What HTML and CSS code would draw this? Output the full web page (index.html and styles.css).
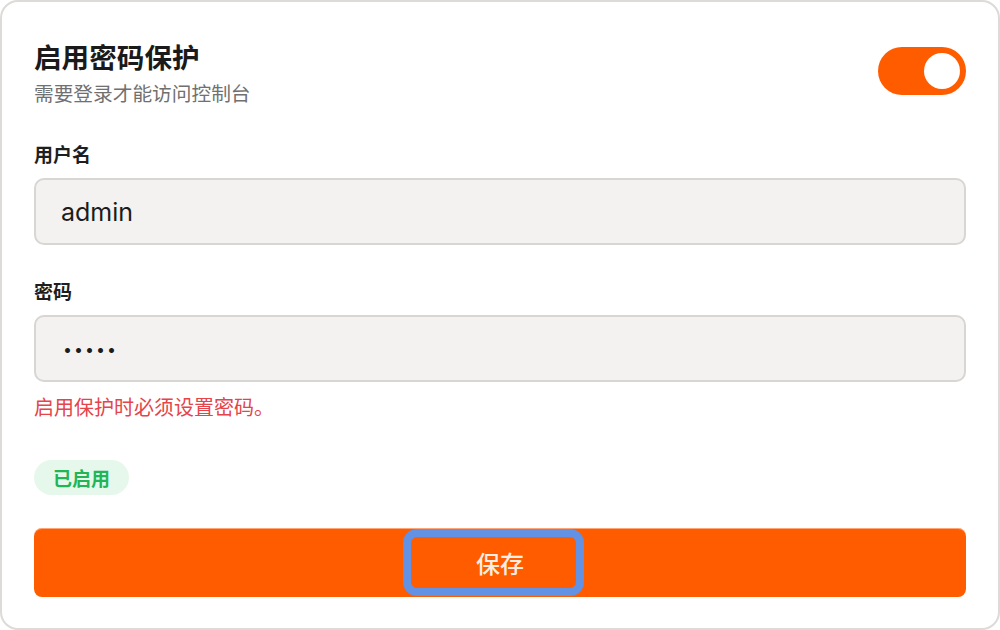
FILE: index.html
```html
<!DOCTYPE html>
<html lang="zh-CN">
<head>
<meta charset="utf-8">
<title>密码保护</title>
<link rel="stylesheet" href="styles.css">
</head>
<body>
<div class="card">
  <div class="header">
    <div class="heading">
      <h1 class="title">启用密码保护</h1>
      <p class="subtitle">需要登录才能访问控制台</p>
    </div>
    <div class="toggle" role="switch" aria-checked="true"><span class="knob"></span></div>
  </div>

  <div class="field">
    <label class="label" for="user">用户名</label>
    <input class="input" id="user" type="text" value="admin">
  </div>

  <div class="field">
    <label class="label" for="pass">密码</label>
    <input class="input input-pass" id="pass" type="password" value="admin">
    <p class="error">启用保护时必须设置密码。</p>
  </div>

  <div class="status-row"><span class="badge">已启用</span></div>

  <button class="save" type="button"><span class="save-ring">保存</span></button>
</div>
</body>
</html>
```

FILE: styles.css
```css
* { box-sizing: border-box; }
html, body { margin: 0; padding: 0; background: #ffffff; }
body {
  font-family: "Inter", "Noto Sans CJK SC", sans-serif;
  color: #1c1c1c;
}
.card {
  width: 1000px;
  height: 630px;
  border: 2px solid #dddad7;
  border-radius: 18px;
  background: #ffffff;
  padding: 38px 32px 31px;
  display: flex;
  flex-direction: column;
}
.header {
  display: flex;
  justify-content: space-between;
  align-items: flex-start;
}
.title {
  margin: 0;
  font-size: 27.6px;
  line-height: 36px;
  font-weight: 700;
  color: #1a1a1a;
}
.subtitle {
  margin: 4px 0 0;
  font-size: 19.7px;
  line-height: 28px;
  color: #707070;
}
.toggle {
  margin-top: 7px;
  width: 88px;
  height: 48px;
  border-radius: 24px;
  background: #ff5c00;
  display: flex;
  justify-content: flex-end;
  align-items: center;
  padding: 0 6px;
}
.knob {
  width: 36px;
  height: 36px;
  border-radius: 50%;
  background: #ffffff;
}
.field {
  display: flex;
  flex-direction: column;
  margin-top: 34px;
}
.label {
  font-size: 19px;
  line-height: 28px;
  font-weight: 700;
  color: #1e1e1e;
  margin-bottom: 8px;
}
.input {
  width: 100%;
  height: 67px;
  border: 2px solid #d8d5d2;
  border-radius: 10px;
  background: #f3f2f0;
  padding: 0 25px;
  font-family: "Inter", "Noto Sans CJK SC", sans-serif;
  font-size: 25px;
  color: #1c1c1c;
  outline: none;
}
.input-pass {
  font-size: 16px;
  letter-spacing: 2px;
  padding-left: 27px;
}
.error {
  margin: 12px 0 0;
  font-size: 20px;
  line-height: 28px;
  color: #e5444a;
}
.status-row {
  margin-top: 38px;
  display: flex;
}
.badge {
  display: inline-flex;
  align-items: center;
  justify-content: center;
  height: 35px;
  padding: 0 19px;
  border-radius: 18px;
  background: #e6f8ec;
  color: #22b558;
  font-size: 19px;
  font-weight: 700;
}
.save {
  margin-top: 33px;
  width: 100%;
  height: 69px;
  border: none;
  border-radius: 8px;
  background: #ff5c00;
  box-shadow: inset 0 1px 0 rgba(255, 255, 255, 0.45);
  display: flex;
  justify-content: center;
  align-items: center;
  padding: 0;
  font-family: "Inter", "Noto Sans CJK SC", sans-serif;
}
.save-ring {
  width: 181px;
  height: 67px;
  border: 8px solid #6391e3;
  border-radius: 14px;
  margin-right: 13px;
  padding-left: 13px;
  display: flex;
  justify-content: center;
  align-items: center;
  color: #fdeee4;
  font-size: 24px;
  font-weight: 500;
}
```
